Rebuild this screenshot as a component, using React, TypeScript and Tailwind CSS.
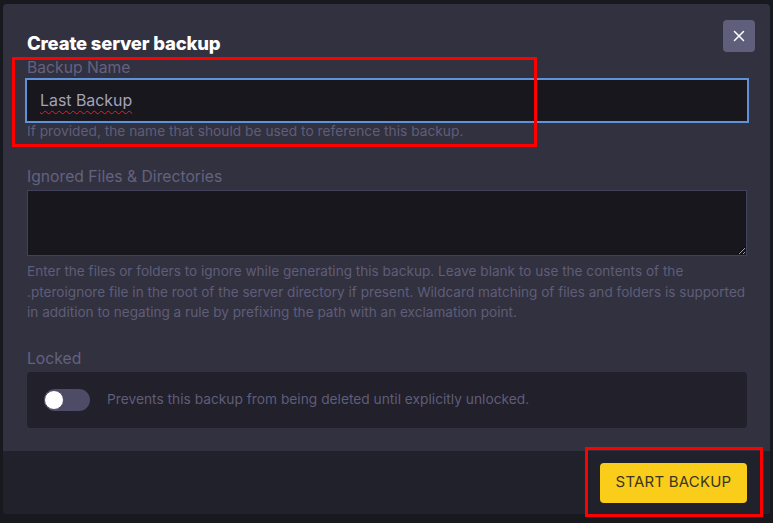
import React from "react";
import { X } from "lucide-react";

const font = { fontFamily: "Inter, 'Noto Sans', sans-serif" };

const App = () => {
  return (
    <div className="relative min-h-screen bg-[#18181f] pt-[4px] px-[3px]" style={font}>
      {/* Modal */}
      <div className="relative w-[767px] h-[510px] rounded-[4px] bg-[#32313f] flex flex-col overflow-hidden">
        <button className="absolute top-[16px] right-[15px] w-[32px] h-[32px] rounded-[4px] bg-[#5f5e7b] flex items-center justify-center">
          <X className="w-[18px] h-[18px] text-white" strokeWidth={2} />
        </button>

        <div className="flex-1 px-[24px] pt-[27px]">
          <h2 className="text-[18.5px] leading-[24px] font-extrabold text-white tracking-[-0.2px]">
            Create server backup
          </h2>

          {/* Backup name */}
          <label className="block mt-[3px] text-[15.7px] leading-[20px] text-[#64627f]">Backup Name</label>
          <div className="-ml-[2px] w-[724px] h-[45px] bg-[#17171d] border-2 border-[#5f92d8] flex items-center px-[13px]">
            <span className="text-[15.9px] text-[#a4a2bb] underline decoration-wavy decoration-[#e0242c] underline-offset-[4px] decoration-1">
              Last Backup
            </span>
          </div>
          <p className="text-[13.75px] leading-[16px] text-[#5f5d79]">
            If provided, the name that should be used to reference this backup.
          </p>

          {/* Ignored files */}
          <label className="block mt-[28px] mb-[3px] text-[15.7px] leading-[20px] text-[#64627f]">
            Ignored Files &amp; Directories
          </label>
          <textarea className="block w-[720px] h-[66px] bg-[#17171d] border border-[#43415a] outline-none text-[#a4a2bb]" />
          <p className="mt-[5px] text-[13.6px] leading-[20.5px] text-[#5f5d79] whitespace-nowrap">
            Enter the files or folders to ignore while generating this backup. Leave blank to use the contents of the
            <br />
            .pteroignore file in the root of the server directory if present. Wildcard matching of files and folders is supported
            <br />
            in addition to negating a rule by prefixing the path with an exclamation point.
          </p>

          {/* Locked */}
          <label className="block mt-[26px] mb-[3px] text-[15.7px] leading-[20px] text-[#64627f]">Locked</label>
          <div className="w-[720px] h-[56px] rounded-[4px] bg-[#21202b] flex items-center pl-[17px] gap-[17px]">
            <div className="relative w-[46px] h-[22px] rounded-full bg-[#4d4b66]">
              <div className="absolute left-0 top-[1px] w-[20px] h-[20px] rounded-full bg-white border border-[#4d4b66]" />
            </div>
            <span className="text-[13.75px] text-[#5f5d79]">
              Prevents this backup from being deleted until explicitly unlocked.
            </span>
          </div>
        </div>

        {/* Footer */}
        <div className="h-[63px] bg-[#21212b] flex items-center justify-end pr-[23px]">
          <button className="w-[147px] h-[40px] rounded-[4px] bg-[#f9cd19] text-[15px] text-[#3b3524] tracking-[0.2px]">
            START BACKUP
          </button>
        </div>
      </div>

      {/* Annotation boxes */}
      <div className="absolute left-[12px] top-[57px] w-[525px] h-[90px] border-[3px] border-[#ff0000]" />
      <div className="absolute left-[585px] top-[447px] w-[178px] h-[70px] border-[3px] border-[#ff0000]" />
    </div>
  );
};

export default App;
